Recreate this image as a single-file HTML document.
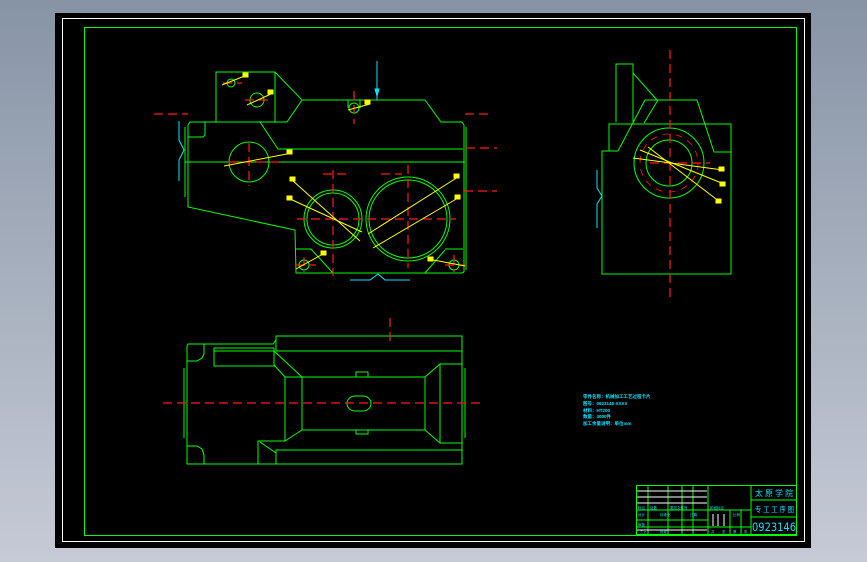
<!DOCTYPE html>
<html><head><style>
html,body{margin:0;padding:0;width:867px;height:562px;overflow:hidden;background:linear-gradient(180deg,#8794a6 0%,#a7b0be 50%,#c6cad6 100%);}
svg{position:absolute;left:0;top:0}
text{font-family:"Liberation Sans","Noto Sans CJK SC",sans-serif;fill:#00e5ff}
</style></head><body>
<svg width="867" height="562" viewBox="0 0 867 562" xmlns="http://www.w3.org/2000/svg">
<rect x="55" y="13" width="756" height="535" fill="#000"/>
<rect x="62.5" y="18.5" width="742" height="523" fill="none" stroke="#fff" stroke-width="1"/>
<rect x="84.5" y="27.5" width="712" height="508" fill="none" stroke="#00ff00" stroke-width="1"/>

<g fill="none" stroke="#00ff00" stroke-width="1">
<polyline points="216,122 216,72 275,72 302,100 287,122"/>
<line x1="275" y1="72" x2="275" y2="122"/>
<polyline points="302,100 425,100 441,122 462,122 464,125 464,272 462,273 296,273 295,230 188,207 188,125 190,122 287,122"/>
<line x1="185" y1="127" x2="185" y2="197"/>
<polyline points="188,137 203,137 205,135 205,122"/>
<line x1="185" y1="162" x2="465" y2="162"/>
<polyline points="260,122 278,149 463,149"/>
<line x1="466" y1="127" x2="466" y2="270"/>
<circle cx="249" cy="162" r="20"/>
<circle cx="333" cy="219" r="29"/>
<circle cx="333" cy="219" r="26"/>
<circle cx="408" cy="219" r="42"/>
<circle cx="408" cy="219" r="39"/>
<circle cx="304" cy="265" r="5"/>
<circle cx="454" cy="265" r="5"/>
<circle cx="231" cy="83" r="4"/>
<circle cx="257" cy="100" r="7"/>
<circle cx="354" cy="108" r="5"/>
<polyline points="348,100 348,108"/><polyline points="360,100 360,108"/>
<polyline points="295,249 311,249 333,273"/>
<polyline points="445,250 425,273"/>
<line x1="445" y1="249" x2="463" y2="249"/>
<polyline points="616,122 616,64 633,64 633,122"/>
<line x1="633" y1="73" x2="657" y2="100"/>
<polyline points="618,151 645,100 697,100 714,152 731,152"/>
<line x1="658" y1="100" x2="644" y2="123"/>
<polyline points="609,151 609,124 731,124 731,274 602,274 602,151 618,151"/>
<circle cx="669" cy="163" r="35"/>
<circle cx="669" cy="163" r="23"/>
<rect x="276" y="336" width="186" height="15"/>
<polyline points="276,340 273,344 188,344 187,346 187,464 462,464 462,336"/>
<polyline points="187,361 197,361 202,358 204,354 204,344"/>
<polyline points="187,446 197,446 202,449 204,455 204,464"/>
<rect x="214" y="348" width="60" height="18"/>
<line x1="214" y1="351" x2="274" y2="351"/>
<rect x="302" y="377" width="123" height="53"/>
<line x1="274" y1="351" x2="302" y2="377"/>
<polyline points="274,365 285,377 285,441 302,430"/>
<line x1="285" y1="377" x2="302" y2="377"/>
<polyline points="425,377 440,364 462,364"/>
<polyline points="425,430 440,443 462,443"/>
<line x1="440" y1="364" x2="440" y2="443"/>
<line x1="465" y1="368" x2="465" y2="438"/>
<line x1="184" y1="368" x2="184" y2="438"/>
<polyline points="285,441 258,441 258,464"/>
<rect x="276" y="450" width="186" height="14"/>
<line x1="260" y1="442" x2="276" y2="453"/>
<rect x="347" y="396" width="24" height="15" rx="8"/>
<rect x="356" y="372" width="12" height="5"/>
<rect x="356" y="430" width="12" height="4"/>
<rect x="636.5" y="485.5" width="160" height="49"/>
<line x1="708" y1="485" x2="708" y2="535"/>
<line x1="751" y1="485" x2="751" y2="535"/>
<line x1="751" y1="500" x2="797" y2="500"/>
<line x1="751" y1="517" x2="797" y2="517"/>
<line x1="708" y1="510" x2="751" y2="510"/>
<line x1="708" y1="527" x2="751" y2="527"/>
<line x1="730" y1="510" x2="730" y2="535"/>
<line x1="741" y1="510" x2="741" y2="535"/>
<line x1="636" y1="510" x2="708" y2="510"/>
<line x1="636" y1="520" x2="708" y2="520"/>
<line x1="636" y1="527" x2="708" y2="527"/>
<line x1="648" y1="485" x2="648" y2="535"/>
<line x1="668" y1="485" x2="668" y2="535"/>
<line x1="682" y1="485" x2="682" y2="535"/>
<line x1="693" y1="485" x2="693" y2="535"/>
</g>
<g stroke="#fff" stroke-width="1">
<line x1="637" y1="491" x2="707" y2="491"/><line x1="637" y1="497" x2="707" y2="497"/><line x1="637" y1="503" x2="707" y2="503"/>
<line x1="637" y1="530" x2="707" y2="530"/>
<line x1="713" y1="514" x2="713" y2="526"/><line x1="718" y1="514" x2="718" y2="526"/><line x1="724" y1="514" x2="724" y2="526"/>
</g>

<g stroke="#ff1a1a" stroke-width="1.2" stroke-dasharray="9,5" fill="none">
<line x1="154" y1="114" x2="188" y2="114"/>
<line x1="466" y1="148" x2="497" y2="148"/>
<line x1="464" y1="191" x2="497" y2="191"/>
<line x1="465" y1="114" x2="492" y2="114"/>
<line x1="297" y1="219" x2="456" y2="219"/>
<line x1="333" y1="170" x2="333" y2="276"/>
<line x1="408" y1="165" x2="408" y2="268"/>
<line x1="323" y1="174" x2="349" y2="174"/>
<line x1="381" y1="174" x2="402" y2="174"/>
<line x1="249" y1="143" x2="249" y2="186"/>
<line x1="228" y1="162" x2="280" y2="162"/>
<line x1="354" y1="91" x2="354" y2="124"/>
<line x1="670" y1="50" x2="670" y2="300"/>
<line x1="163" y1="403" x2="485" y2="403"/>
<line x1="390" y1="318" x2="390" y2="342"/>
<line x1="304" y1="257" x2="304" y2="272"/>
<line x1="454" y1="255" x2="454" y2="272"/>
<line x1="295" y1="265" x2="316" y2="265"/>
<line x1="445" y1="265" x2="465" y2="265"/>
<line x1="223" y1="83" x2="242" y2="83"/>
<line x1="245" y1="100" x2="268" y2="100"/>
<line x1="650" y1="163" x2="710" y2="163"/>
</g>
<circle cx="669" cy="163" r="29" fill="none" stroke="#ff1a1a" stroke-width="0.8" stroke-dasharray="7,6"/>

<g stroke="#ffff00" stroke-width="1" fill="#ffff00">
<line x1="224" y1="166" x2="292" y2="153"/><rect x="287" y="150" width="5" height="4"/>
<line x1="222" y1="85" x2="247" y2="75"/><rect x="243" y="73" width="5" height="4"/>
<line x1="247" y1="105" x2="273" y2="93"/><rect x="268" y="90" width="5" height="4"/>
<line x1="348" y1="110" x2="370" y2="104"/><rect x="365" y="100" width="5" height="4"/>
<line x1="292" y1="180" x2="360" y2="241"/><rect x="290" y="177" width="5" height="4"/>
<line x1="288" y1="198" x2="362" y2="232"/><rect x="287" y="196" width="5" height="4"/>
<line x1="368" y1="234" x2="458" y2="177"/><rect x="454" y="174" width="5" height="4"/>
<line x1="373" y1="248" x2="458" y2="198"/><rect x="455" y="195" width="5" height="4"/>
<line x1="296" y1="269" x2="323" y2="254"/><rect x="321" y="251" width="5" height="4"/>
<line x1="428" y1="259" x2="465" y2="266"/><rect x="428" y="257" width="5" height="4"/>
<line x1="633" y1="158" x2="723" y2="170"/><rect x="719" y="167" width="5" height="4"/>
<line x1="640" y1="150" x2="724" y2="184"/><rect x="720" y="182" width="5" height="4"/>
<line x1="648" y1="147" x2="720" y2="202"/><rect x="716" y="199" width="5" height="4"/>
</g>

<g stroke="#00e5ff" stroke-width="1" fill="none">
<line x1="377" y1="61" x2="377" y2="100"/>
<polygon points="375,89 379,89 377,96" fill="#00e5ff"/>
<polyline points="179,121 179,140 184,150 179,160 179,181"/>
<polyline points="350,280 370,280 378,274 385,280 410,280"/>
<polyline points="597,170 597,188 602,196 597,204 597,228"/>
</g>

<g font-size="4.5" style="font-weight:bold">
<text x="583" y="398">零件名称：机械加工工艺过程卡片</text>
<text x="583" y="405">图号：0923146-XXXX</text>
<text x="583" y="412">材料：HT200</text>
<text x="583" y="418">数量：4000件</text>
<text x="583" y="425">加工余量说明：单位mm</text>
</g>
<text x="755" y="496" font-size="8" textLength="38" lengthAdjust="spacingAndGlyphs">太 原 学 院</text>
<text x="755" y="512" font-size="7.5" textLength="39" lengthAdjust="spacingAndGlyphs">专 工 工 序 图</text>
<text x="752" y="531" font-size="11.5" style="font-family:'DejaVu Sans',sans-serif" textLength="44" lengthAdjust="spacingAndGlyphs">0923146</text>
<g font-size="3.5">
<text x="638" y="509">标记</text><text x="650" y="509">处数</text><text x="670" y="509">更改文件号</text>
<text x="638" y="516">设计</text><text x="660" y="516">标准化</text><text x="690" y="516">日期</text>
<text x="710" y="509">阶段标记</text><text x="733" y="516">比例</text>
<text x="638" y="526">审核</text><text x="640" y="533">工艺</text><text x="660" y="533">批准</text>
<text x="711" y="533">共</text><text x="722" y="533">张</text><text x="733" y="533">第</text><text x="744" y="533">张</text>
</g>
</svg>
</body></html>
